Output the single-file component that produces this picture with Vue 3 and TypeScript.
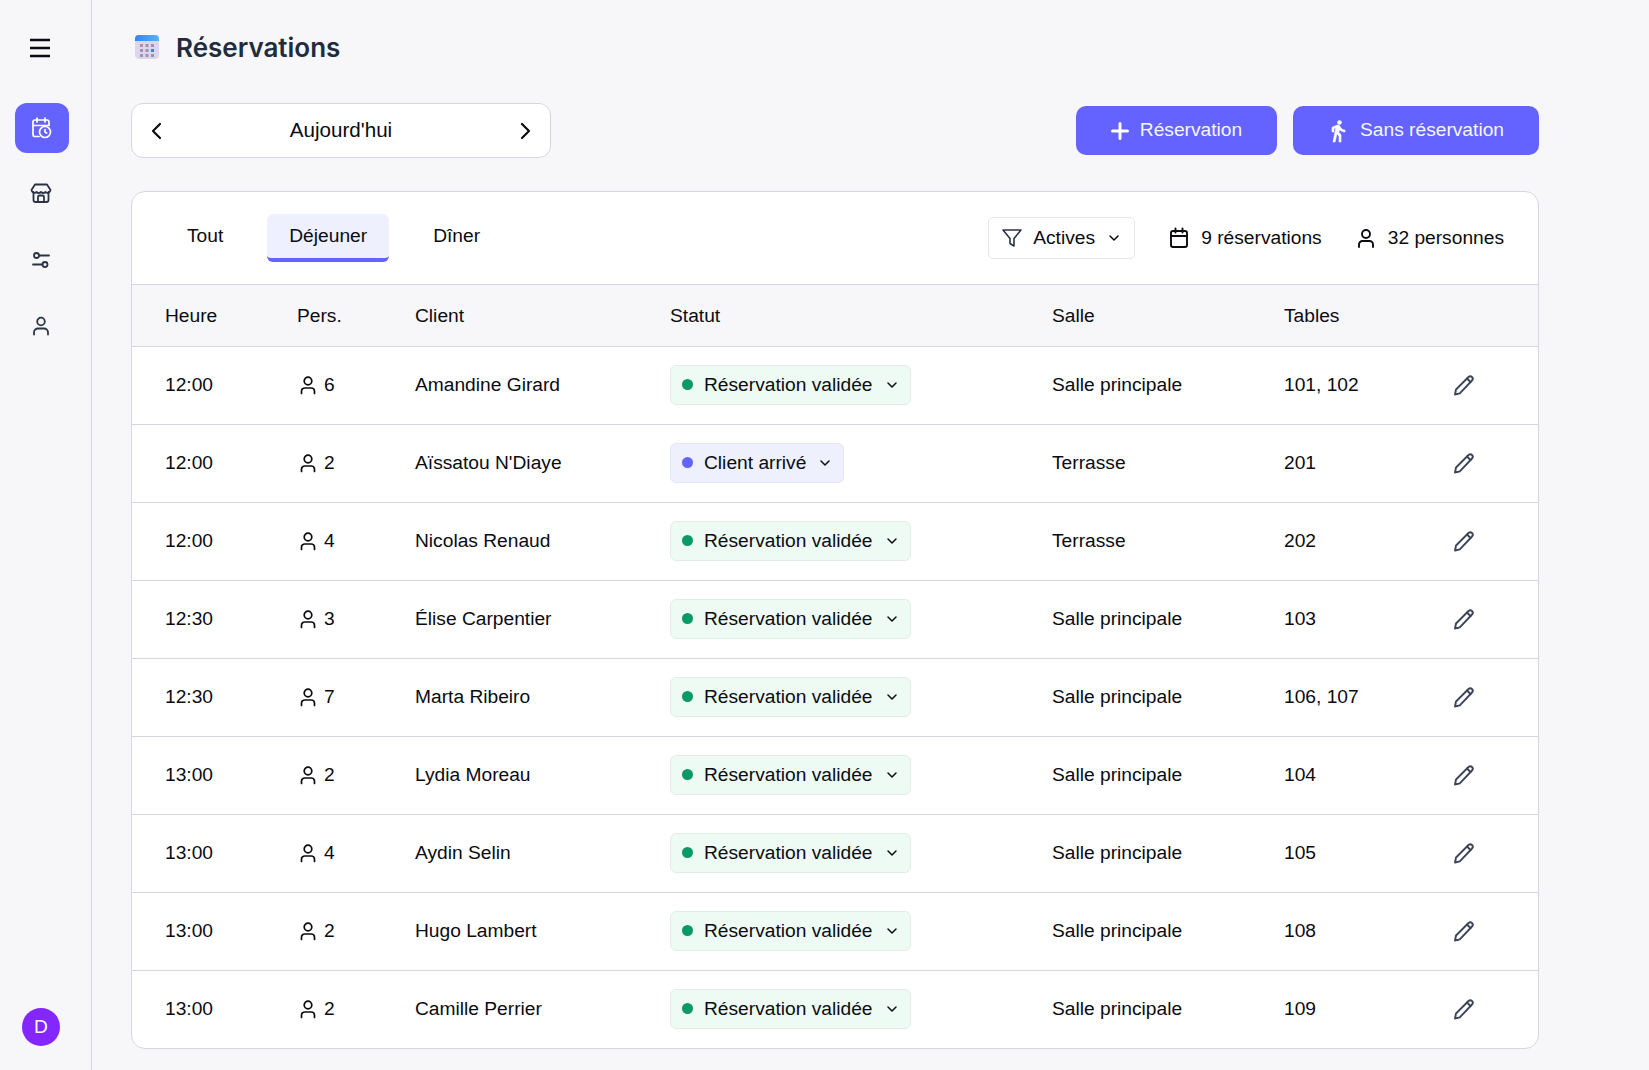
<script setup lang="ts">
interface Row { time: string; pers: number; name: string; arrived?: boolean; room: string; tables: string }
const rows: Row[] = [
  { time: '12:00', pers: 6, name: 'Amandine Girard', room: 'Salle principale', tables: '101, 102' },
  { time: '12:00', pers: 2, name: "Aïssatou N'Diaye", arrived: true, room: 'Terrasse', tables: '201' },
  { time: '12:00', pers: 4, name: 'Nicolas Renaud', room: 'Terrasse', tables: '202' },
  { time: '12:30', pers: 3, name: 'Élise Carpentier', room: 'Salle principale', tables: '103' },
  { time: '12:30', pers: 7, name: 'Marta Ribeiro', room: 'Salle principale', tables: '106, 107' },
  { time: '13:00', pers: 2, name: 'Lydia Moreau', room: 'Salle principale', tables: '104' },
  { time: '13:00', pers: 4, name: 'Aydin Selin', room: 'Salle principale', tables: '105' },
  { time: '13:00', pers: 2, name: 'Hugo Lambert', room: 'Salle principale', tables: '108' },
  { time: '13:00', pers: 2, name: 'Camille Perrier', room: 'Salle principale', tables: '109' },
]
const tabs = ['Tout', 'Déjeuner', 'Dîner']
</script>

<template>
  <div class="app">
    <aside class="sidebar">
      <button class="burger" aria-label="Menu">
        <svg width="22" height="20" viewBox="0 0 22 20" fill="none" stroke="#0b0b12" stroke-width="2.400"><path d="M1 2h20M1 10h20M1 18h20" /></svg>
      </button>
      <nav class="nav">
        <a class="nav-item active">
          <svg width="24" height="24" viewBox="0 0 24 24" fill="none" stroke="#fff" stroke-width="1.700" stroke-linecap="round" stroke-linejoin="round">
            <path d="M10 20.500H6a2 2 0 0 1-2-2V6a2 2 0 0 1 2-2h12a2 2 0 0 1 2 2v3" />
            <path d="M8 2v4M16 2v4M4 9.500h16" />
            <circle cx="16" cy="16" r="5.500" />
            <path d="M16 13.500V16l1.600 1" />
          </svg>
        </a>
        <a class="nav-item store">
          <svg width="24" height="24" viewBox="0 0 24 24" fill="none" stroke="#2a3345" stroke-width="1.800" stroke-linecap="round" stroke-linejoin="round">
            <path d="M4.500 11v8a2 2 0 0 0 2 2h11a2 2 0 0 0 2-2v-8" />
            <path d="M6 3.500h12l3.500 5.500a3 3 0 0 1-5 2 3.200 3.200 0 0 1-4.500 0 3.200 3.200 0 0 1-4.500 0 3 3 0 0 1-5-2z" />
            <path d="M9 21v-5a1.500 1.500 0 0 1 1.500-1.500h3A1.500 1.500 0 0 1 15 16v5" />
          </svg>
        </a>
        <a class="nav-item">
          <svg width="24" height="24" viewBox="0 0 24 24" fill="none" stroke="#2a3345" stroke-width="1.800" stroke-linecap="round">
            <circle cx="7.500" cy="7.500" r="2.500" />
            <circle cx="16" cy="16.500" r="2.500" />
            <path d="M10 7.500h10M4 16.500h9.500" />
          </svg>
        </a>
        <a class="nav-item">
          <svg width="24" height="24" viewBox="0 0 24 24" fill="none" stroke="#2a3345" stroke-width="1.800" stroke-linecap="round">
            <circle cx="12" cy="7.500" r="3.800" />
            <path d="M5 20.500v-2a4 4 0 0 1 4-4h6a4 4 0 0 1 4 4v2" />
          </svg>
        </a>
      </nav>
      <div class="avatar">D</div>
    </aside>

    <main class="main">
      <header class="title-row">
        <svg class="title-icon" width="26" height="26" viewBox="0 0 26 26">
          <defs>
            <linearGradient id="cal-top" x1="0" y1="0" x2="1" y2="0">
              <stop offset="0" stop-color="#2f86f6" />
              <stop offset="1" stop-color="#55b4f8" />
            </linearGradient>
          </defs>
          <rect x="1" y="1" width="24" height="24" rx="4" fill="#ded4ee" />
          <path d="M1 7V5a4 4 0 0 1 4-4h16a4 4 0 0 1 4 4v2z" fill="url(#cal-top)" />
          <g fill="#9a96ac">
            <rect x="6" y="10" width="3" height="3" /><rect x="11.500" y="10" width="3" height="3" /><rect x="17" y="10" width="3" height="3" />
            <rect x="6" y="15" width="3" height="3" /><rect x="11.500" y="15" width="3" height="3" />
            <rect x="6" y="20" width="3" height="3" /><rect x="11.500" y="20" width="3" height="3" /><rect x="17" y="20" width="3" height="3" />
          </g>
          <rect x="17" y="15" width="3" height="3" fill="#2f86f6" />
        </svg>
        <h1>Réservations</h1>
      </header>

      <div class="toolbar">
        <div class="date-nav">
          <svg width="24" height="24" viewBox="0 0 24 24" fill="none" stroke="#0b0b12" stroke-width="2.200" stroke-linecap="round" stroke-linejoin="round"><path d="M15 5l-7 7 7 7" /></svg>
          <span class="date-label">Aujourd'hui</span>
          <svg width="24" height="24" viewBox="0 0 24 24" fill="none" stroke="#0b0b12" stroke-width="2.200" stroke-linecap="round" stroke-linejoin="round"><path d="M9 5l7 7-7 7" /></svg>
        </div>
        <div class="actions">
          <button class="btn btn-plus">
            <svg width="18" height="18" viewBox="0 0 18 18" fill="none" stroke="#fff" stroke-width="3" stroke-linecap="round"><path d="M9 1.500v15M1.500 9h15" /></svg>
            <span class="btn-text">Réservation</span>
          </button>
          <button class="btn btn-walk">
            <svg width="24" height="24" viewBox="0 0 24 24" fill="#fff" stroke="#fff" stroke-width="0.600"><path d="M13.500 5.500c1.100 0 2-.9 2-2s-.9-2-2-2-2 .9-2 2 .9 2 2 2zM9.800 8.900L7 23h2.100l1.800-8 2.100 2v6h2v-7.500l-2.100-2 .6-3C14.800 12 16.800 13 19 13v-2c-1.900 0-3.500-1-4.300-2.400l-1-1.600c-.4-.6-1-1-1.700-1-.3 0-.5.1-.8.1L6 8.300V13h2V9.600l1.800-.7" /></svg>
            <span class="btn-text">Sans réservation</span>
          </button>
        </div>
      </div>

      <section class="card">
        <div class="card-top">
          <div class="tabs">
            <button v-for="t in tabs" :key="t" class="tab" :class="{ on: t === 'Déjeuner' }">{{ t }}</button>
          </div>
          <div class="summary">
            <div class="filter">
              <svg width="22" height="22" viewBox="0 0 22 22" fill="none" stroke="#2a3345" stroke-width="1.600" stroke-linejoin="round"><path d="M2 3h18l-7 8.500V19l-4-2.500v-5z" /></svg>
              <span>Actives</span>
              <svg class="chev" width="12" height="12" viewBox="0 0 12 12" fill="none" stroke="#0b0b12" stroke-width="1.500" stroke-linecap="round" stroke-linejoin="round"><path d="M2 4l4 4 4-4" /></svg>
            </div>
            <div class="stat stat-cal">
              <svg width="22" height="22" viewBox="0 0 22 22" fill="none" stroke="#0b0b12" stroke-width="1.900" stroke-linecap="round"><rect x="3" y="4" width="16" height="16" rx="2" /><path d="M3 9h16M7.500 1.500v4M14.500 1.500v4" /></svg>
              <span>9 réservations</span>
            </div>
            <div class="stat">
              <svg width="20" height="22" viewBox="0 0 20 22" fill="none" stroke="#0b0b12" stroke-width="1.900" stroke-linecap="round"><circle cx="10" cy="7" r="4" /><path d="M3 20v-2.500a3.500 3.500 0 0 1 3.500-3.500h7a3.500 3.500 0 0 1 3.500 3.500V20" /></svg>
              <span>32 personnes</span>
            </div>
          </div>
        </div>

        <div class="grid head">
          <div>Heure</div><div>Pers.</div><div>Client</div><div>Statut</div><div>Salle</div><div>Tables</div><div></div>
        </div>
        <div v-for="(r, i) in rows" :key="i" class="grid row">
          <div>{{ r.time }}</div>
          <div class="pers">
            <svg width="18" height="20" viewBox="0 0 18 20" fill="none" stroke="#0b0b12" stroke-width="1.700" stroke-linecap="round"><circle cx="9" cy="6" r="3.800" /><path d="M2.500 18.500v-2.200A3.300 3.300 0 0 1 5.800 13h6.400a3.300 3.300 0 0 1 3.300 3.300v2.200" /></svg>
            {{ r.pers }}
          </div>
          <div>{{ r.name }}</div>
          <div>
            <span class="status" :class="{ arrived: r.arrived }">
              <i class="dot"></i>
              {{ r.arrived ? 'Client arrivé' : 'Réservation validée' }}
              <svg class="chev" width="12" height="12" viewBox="0 0 12 12" fill="none" stroke="#0b0b12" stroke-width="1.500" stroke-linecap="round" stroke-linejoin="round"><path d="M2 4l4 4 4-4" /></svg>
            </span>
          </div>
          <div>{{ r.room }}</div>
          <div>{{ r.tables }}</div>
          <div class="edit">
            <svg width="24" height="24" viewBox="0 0 24 24" fill="none" stroke="#3b4557" stroke-width="1.900" stroke-linecap="round" stroke-linejoin="round">
              <path d="M3 21.500l1-5L16.500 4a2.500 2.500 0 0 1 3.500 0 2.500 2.500 0 0 1 0 3.500L7.800 20.300z" />
              <path d="M15 5.500l3.500 3.500" />
            </svg>
          </div>
        </div>
      </section>
    </main>
  </div>
</template>

<style>
body { background: #f7f7fa; }
</style>

<style scoped>
.app {
  display: flex;
  min-height: 1070px;
  background: #f7f7fa;
  font-family: "Liberation Sans", Arial, sans-serif;
  font-size: 19.2px;
  color: #0b0b12;
}
.sidebar {
  width: 82px;
  padding-right: 9px;
  flex: none;
  border-right: 1px solid #d5d7e0;
  display: flex;
  flex-direction: column;
  align-items: center;
  box-sizing: content-box;
}
.burger {
  background: none;
  border: 0;
  padding: 0;
  margin: 38px 0 0 -3px;
  height: 20px;
  display: flex;
}
.nav {
  margin-top: 45px;
  margin-left: 1px;
  display: flex;
  flex-direction: column;
  gap: 16px;
}
.nav-item {
  width: 54px;
  height: 50px;
  box-sizing: border-box;
  padding-right: 2px;
  border-radius: 12px;
  display: flex;
  align-items: center;
  justify-content: center;
}
.nav-item.active { background: #6463ff; }
.nav-item.store { padding-bottom: 2px; }
.avatar {
  margin-top: auto;
  margin-bottom: 25px;
  width: 38px;
  height: 38px;
  border-radius: 50%;
  background: #8426ff;
  color: #fff;
  display: flex;
  align-items: center;
  justify-content: center;
}
.main {
  flex: 1;
  min-width: 0;
  padding: 0 110px 22px 39px;
  box-sizing: border-box;
}
.title-row {
  height: 103px;
  box-sizing: border-box;
  padding: 34px 0 0 3px;
  display: flex;
  gap: 16px;
  align-items: flex-start;
}
.title-icon { flex: none; }
h1 {
  margin: 1px 0 0;
  font-family: Inter, "Liberation Sans", sans-serif;
  font-size: 26px;
  font-weight: 600;
  line-height: 26px;
  color: #202b3f;
}
.toolbar {
  display: flex;
  justify-content: space-between;
  align-items: center;
  height: 55px;
}
.date-nav {
  width: 420px;
  height: 55px;
  box-sizing: border-box;
  background: #fff;
  border: 1px solid #d5d7e0;
  border-radius: 12px;
  display: flex;
  align-items: center;
  justify-content: space-between;
  padding: 0 13px;
  font-size: 20.6px;
}
.date-label { padding-bottom: 2px; }
.actions { display: flex; gap: 16px; }
.btn {
  height: 49px;
  border: 0;
  border-radius: 10px;
  background: #6463ff;
  color: #f6f6ff;
  font: inherit;
  display: flex;
  align-items: center;
}
.btn-text { position: relative; top: -1px; }
.btn-plus { width: 201px; gap: 11px; justify-content: center; }
.btn-walk { width: 246px; gap: 10px; padding: 0 0 0 33px; }
.card {
  margin-top: 33px;
  background: #fff;
  border: 1px solid #d5d7e0;
  border-radius: 14px;
  overflow: hidden;
}
.card-top {
  height: 92px;
  display: flex;
  justify-content: space-between;
  padding: 22px 34px 0 33px;
  box-sizing: border-box;
}
.tabs { display: flex; gap: 22px; height: 48px; }
.tab {
  border: 0;
  background: none;
  font: inherit;
  color: inherit;
  padding: 0 22px 1px;
  border-radius: 6px;
  border-bottom: 4px solid transparent;
}
.tab.on {
  background: #eef1fd;
  border-bottom-color: #6463ff;
}
.summary { display: flex; align-items: center; height: 44px; margin-top: 2px; }
.filter {
  width: 147px;
  height: 42px;
  box-sizing: border-box;
  border: 1px solid #e6e7ec;
  border-radius: 5px;
  display: flex;
  align-items: center;
  padding: 0 12px;
  gap: 10px;
}
.filter .chev { margin-left: 3px; }
.stat { display: flex; align-items: center; gap: 12px; margin-left: 34px; }
.stat-cal { margin-left: 33px; gap: 11px; }
.grid {
  display: grid;
  grid-template-columns: 132px 118px 255px 382px 232px 167px 1fr;
  padding-left: 33px;
  align-items: center;
  border-top: 1px solid #d5d7e0;
}
.head { height: 61px; background: #f7f7fa; box-sizing: content-box; }
.row { padding-bottom: 2px; box-sizing: border-box; height: 78px; }
.pers { display: flex; align-items: center; gap: 7px; padding-left: 2px; }
.status {
  display: inline-flex;
  align-items: center;
  height: 40px;
  box-sizing: border-box;
  padding: 0 12px 0 11px;
  background: #eefbf4;
  border: 1px solid #e3ece8;
  border-radius: 6px;
}
.status.arrived { background: #eef1fd; border-color: #e4e7f3; }
.dot {
  width: 11px;
  height: 11px;
  border-radius: 50%;
  background: #089a66;
  margin-right: 11px;
}
.arrived .dot { background: #6463ff; }
.status .chev { margin-left: 13px; }
.edit { display: flex; padding-left: 1px; }
</style>
